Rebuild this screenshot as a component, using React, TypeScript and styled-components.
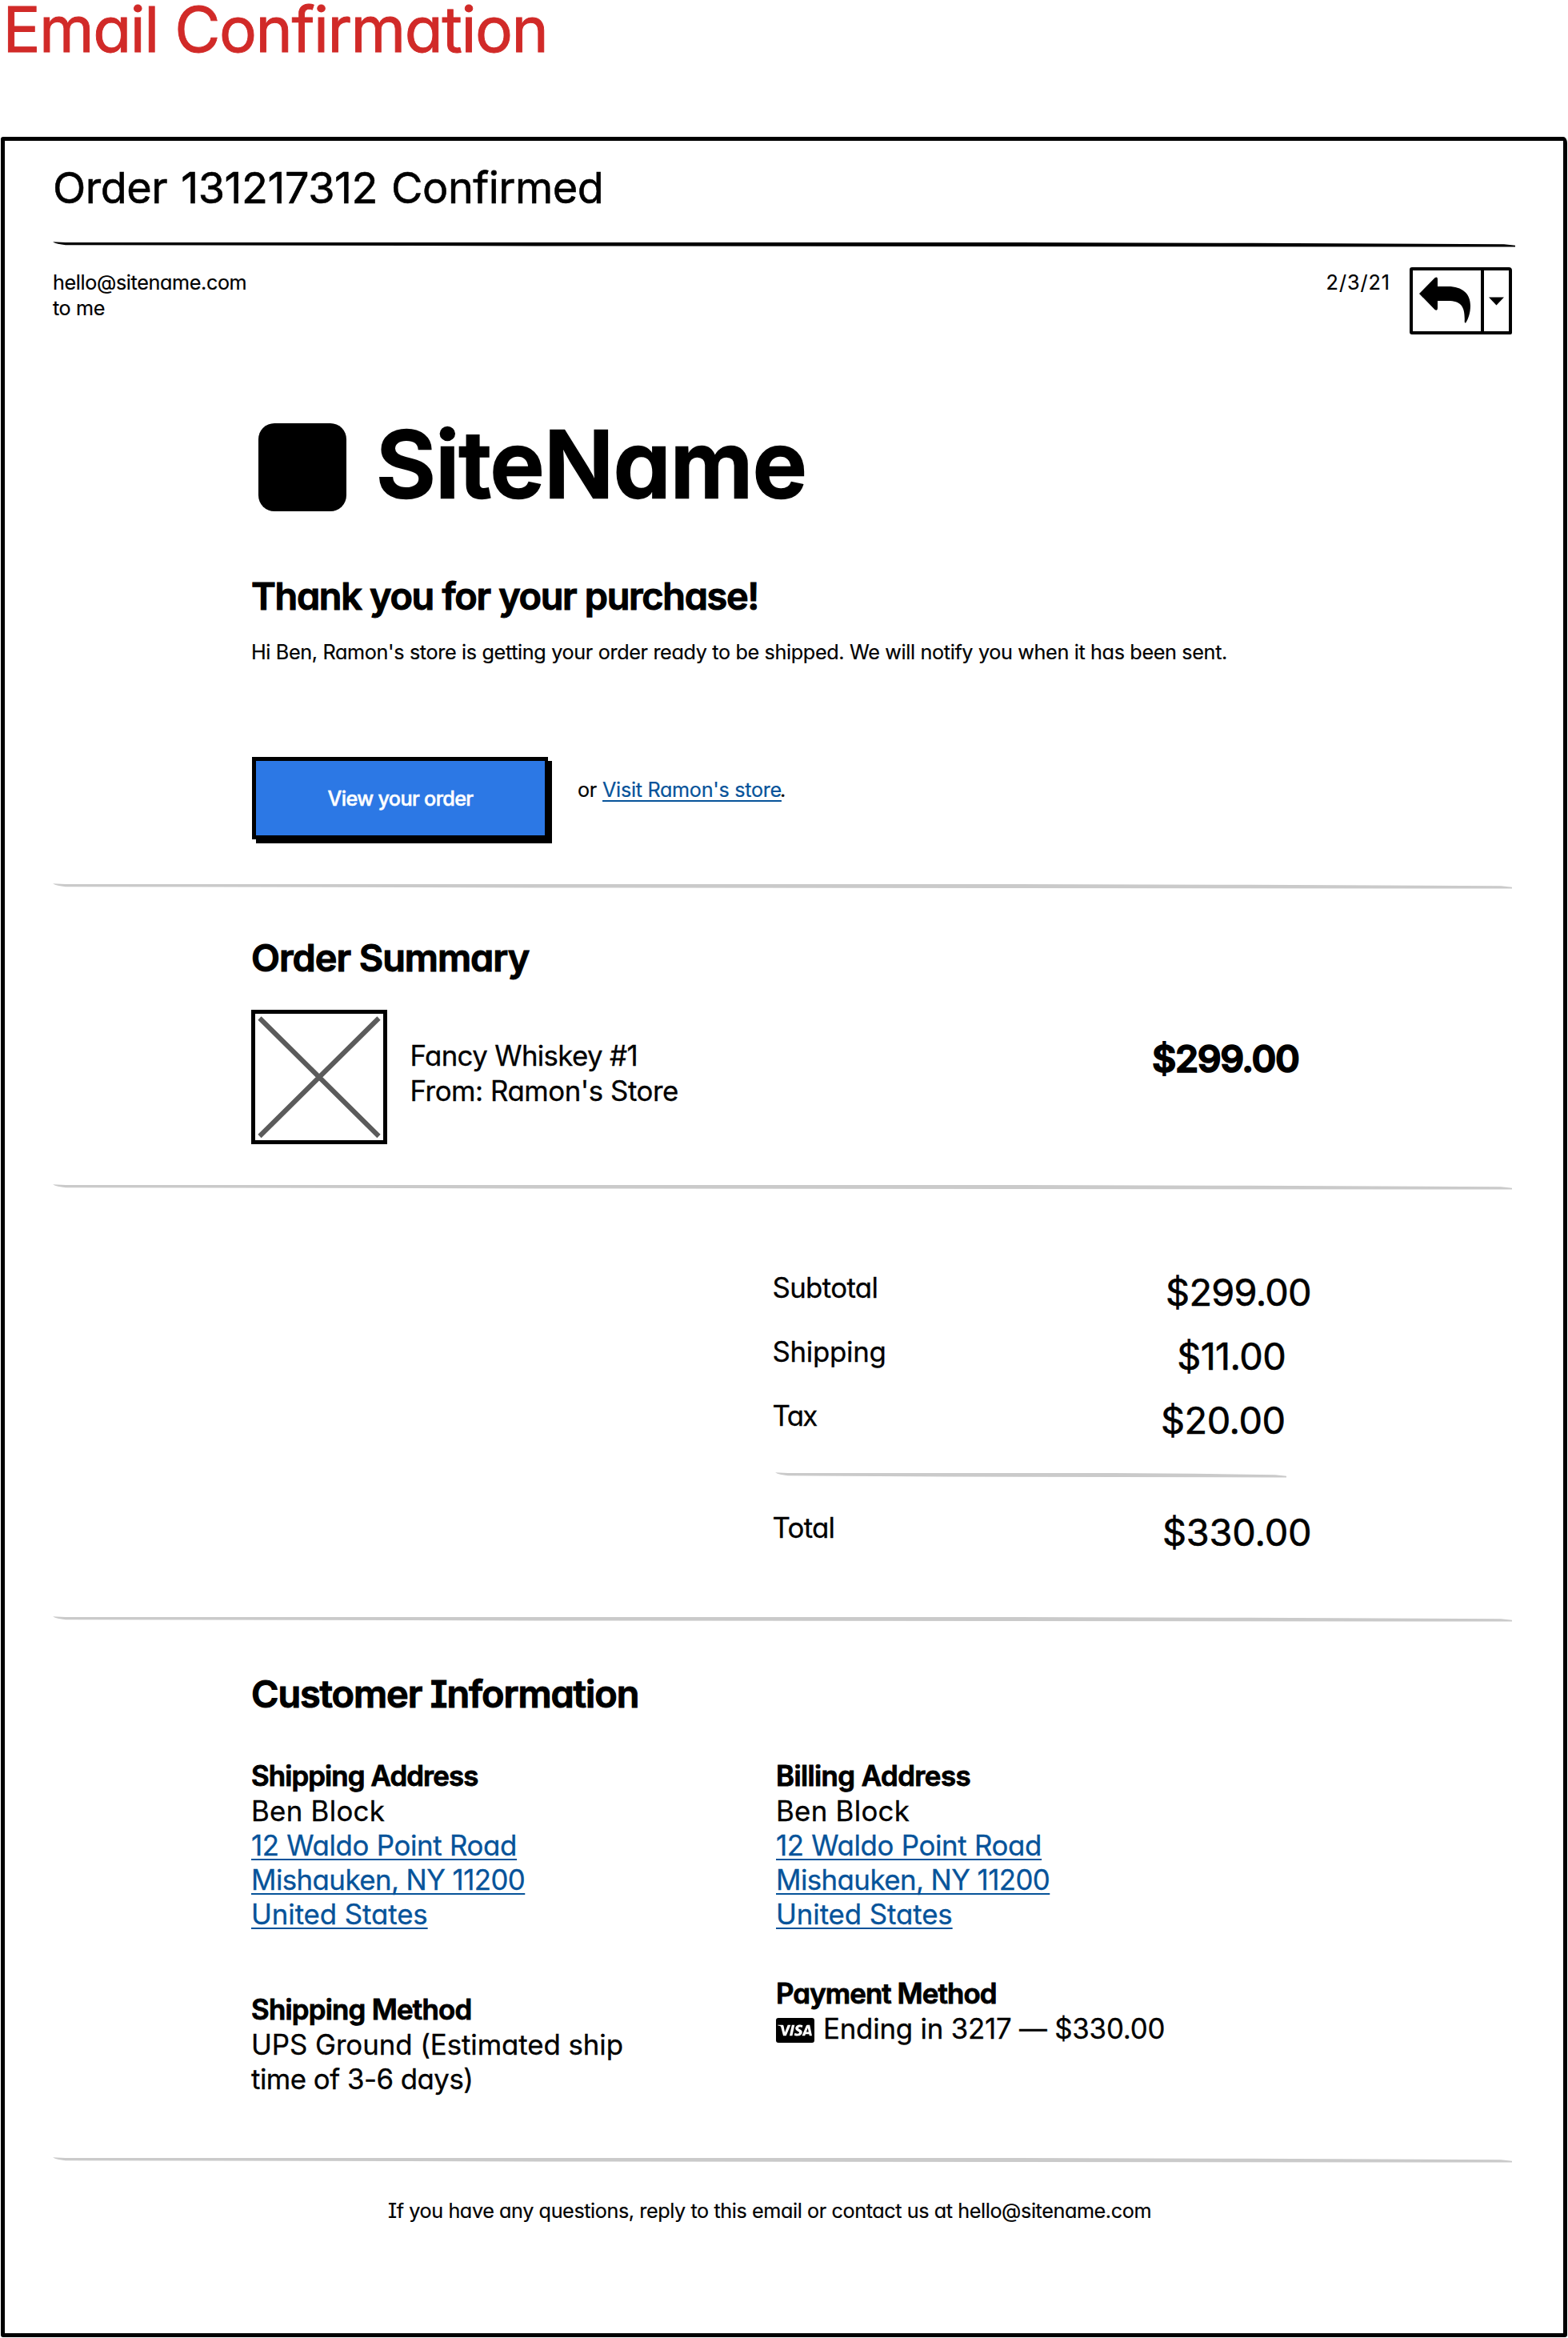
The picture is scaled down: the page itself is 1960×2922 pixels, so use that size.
import React from "react";
import styled, { createGlobalStyle } from "styled-components";
import { SiVisa } from "react-icons/si";

const INK = "#000000";
const LINK = "#06539a";
const RULE = "#cacaca";

const GlobalStyle = createGlobalStyle`
  *, *::before, *::after { box-sizing: border-box; }
  body {
    margin: 0;
    background: #ffffff;
    color: ${INK};
    font-family: Inter, "Open Sans", "Liberation Sans", sans-serif;
    font-feature-settings: "cv11", "cv08";
    font-size: 25.2px;
    line-height: 32px;
    -webkit-text-stroke: 0.2px currentColor;
  }
  h1, h2, h3, p { margin: 0; font: inherit; }
`;

interface Track {
  $track?: number;
}

const tracking = (p: Track) => `${p.$track ?? 0}px`;

const Page = styled.main`
  display: flex;
  flex-direction: column;
  width: 1960px;
  height: 2922px;
`;

const PageTitle = styled.h1`
  padding-left: 3.5px;
  margin-bottom: 97.5px;
  color: #d12a28;
  font-size: 78.4px;
  line-height: 73px;
  letter-spacing: -1.5px;
  white-space: nowrap;
  -webkit-text-stroke-width: 0.9px;
`;

const Mail = styled.article`
  display: flex;
  flex-direction: column;
  height: 2750.5px;
  margin: 0 1px;
  padding: 0 60px 0 59px;
  border: 5px solid ${INK};
  border-radius: 3px 5px 3px 3px / 3px 8px 3px 3px;
`;

const Subject = styled.h2`
  height: 126.5px;
  padding: 29.7px 0 0 1px;
  font-size: 54px;
  line-height: 60px;
  letter-spacing: -0.5px;
  word-spacing: 2.5px;
  white-space: nowrap;
  -webkit-text-stroke-width: 0.6px;
`;

const RuleSvg = styled.svg<{ $width: number }>`
  display: block;
  flex: none;
  width: ${(p) => p.$width}px;
  height: 7px;
  margin-left: 1px;
`;

/* A pen stroke that tapers at both ends and sags slightly to the right. */
function Rule({ width, color = RULE }: { width: number; color?: string }) {
  const w = width;
  const d = `M0 .3 L16 1 H${w * 0.66} L${w * 0.82} 1.8 L${w - 14} 3.2 L${w} 4.8 V6.5 H${w - 14} L${w * 0.33} 5.4 L16 4.2 Q5 3.4 0 .3Z`;
  return (
    <RuleSvg $width={w} viewBox={`0 0 ${w} 7`}>
      <path d={d} fill={color} />
    </RuleSvg>
  );
}

const MetaRow = styled.header`
  display: flex;
  align-items: flex-start;
  padding: 25px 4px 0 1px;
`;

const Sender = styled.div`
  display: flex;
  flex-direction: column;
  margin: 2.5px auto 0 0;
  letter-spacing: -0.38px;
`;

const SentDate = styled.time`
  margin: 2.5px 24px 0 0;
  letter-spacing: 0.95px;
`;

const ReplyGroup = styled.div`
  display: flex;
  width: 128px;
  height: 84px;
  border: 4px solid ${INK};
  border-radius: 3px 4px 2px 3px;
`;

const ReplyButton = styled.button`
  display: flex;
  flex: none;
  width: 89px;
  padding: 0;
  border: 0;
  border-right: 4px solid ${INK};
  background: none;
`;

const MoreButton = styled.button`
  display: flex;
  align-items: center;
  justify-content: center;
  flex: 1;
  padding: 0 1px 0 0;
  border: 0;
  background: none;
`;

const Section = styled.section<{ $height: number; $top: number }>`
  display: flex;
  flex-direction: column;
  flex: none;
  height: ${(p) => p.$height}px;
  padding: ${(p) => p.$top}px 0 0 249px;
`;

const Brand = styled.div`
  display: flex;
  align-items: flex-start;
  gap: 37px;
  margin-bottom: 78px;
  padding-left: 9px;
`;

const BrandMark = styled.div`
  width: 110px;
  height: 110px;
  border-radius: 20px;
  background: ${INK};
`;

const BrandName = styled.div`
  font-size: 115px;
  font-weight: 600;
  line-height: 104px;
  letter-spacing: -0.6px;
  -webkit-text-stroke-width: 2.4px;
`;

const Heading = styled.h2<Track>`
  font-size: 46.8px;
  font-weight: 600;
  line-height: 56px;
  letter-spacing: ${tracking};
  white-space: nowrap;
  -webkit-text-stroke-width: 1.1px;
`;

const Intro = styled.p`
  margin-top: 25.5px;
  letter-spacing: -0.35px;
  white-space: nowrap;
`;

const Actions = styled.div`
  display: flex;
  align-items: flex-start;
  gap: 37px;
  margin: 115.5px 0 0 1px;
`;

const PrimaryButton = styled.button`
  width: 370px;
  height: 103px;
  padding: 0;
  border: 5px solid ${INK};
  border-right-width: 4px;
  box-shadow: 5px 5px 0 ${INK};
  background: #2c78e5;
  color: #ffffff;
  font: 500 25.2px/32px Inter, "Open Sans", sans-serif;
  font-feature-settings: inherit;
  letter-spacing: -0.65px;
  -webkit-text-stroke-width: 0.5px;
`;

const StoreHint = styled.p`
  display: flex;
  gap: 7px;
  margin-top: 24.5px;
  letter-spacing: -0.27px;
`;

const Link = styled.a<Track>`
  color: ${LINK};
  letter-spacing: ${tracking};
  text-decoration: underline;
  text-decoration-thickness: 2px;
  text-decoration-skip-ink: none;
  text-underline-offset: 4px;
`;

const Period = styled.span`
  margin-left: -2px;
`;

const Product = styled.div`
  display: flex;
  align-items: flex-start;
  margin-top: 37.3px;
`;

const Thumb = styled.div`
  display: flex;
  width: 170px;
  height: 168px;
  border: 5px solid ${INK};
`;

const ProductText = styled.div`
  display: flex;
  flex-direction: column;
  margin: 35px auto 0 28.5px;
`;

const Line = styled.span<Track>`
  font-size: 34.8px;
  line-height: 44px;
  letter-spacing: ${tracking};
  white-space: nowrap;
  -webkit-text-stroke-width: 0.3px;
`;

const ProductPrice = styled.strong`
  width: 454px;
  margin-top: 32.7px;
  font-size: 46.8px;
  font-weight: 600;
  line-height: 56px;
  letter-spacing: -1.45px;
  -webkit-text-stroke-width: 1.6px;
`;

const Totals = styled.div`
  display: flex;
  flex-direction: column;
  padding-left: 651.5px;
`;

const TotalRow = styled.div`
  display: grid;
  grid-template-columns: 484.5px auto;
  align-items: start;
  height: 80px;
`;

const Amount = styled.span<Track & { $indent: number }>`
  padding-left: ${(p) => p.$indent}px;
  font-size: 46.8px;
  line-height: 56px;
  letter-spacing: ${tracking};
  -webkit-text-stroke-width: 0.6px;
`;

const SumRule = styled.div`
  height: 60px;
  padding: 13.5px 0 0 2.5px;
`;

const Columns = styled.div`
  display: grid;
  grid-template-columns: 656px auto;
  margin-top: 52px;
`;

const Column = styled.div<{ $gap: number }>`
  display: flex;
  flex-direction: column;
  gap: ${(p) => p.$gap}px;
`;

const Block = styled.div`
  display: flex;
  flex-direction: column;
  align-items: flex-start;
`;

const BlockTitle = styled.h3<Track>`
  font-size: 34.8px;
  font-weight: 600;
  line-height: 45px;
  letter-spacing: ${tracking};
  -webkit-text-stroke-width: 0.9px;
`;

const BlockLine = styled(Line)`
  line-height: 43.1px;
`;

const Payment = styled.div`
  display: flex;
  align-items: flex-start;
  gap: 11.5px;
  margin-top: -1px;
`;

const CardBadge = styled.span`
  display: flex;
  align-items: center;
  justify-content: center;
  width: 47.5px;
  height: 31.5px;
  margin-top: 8.5px;
  border-radius: 3px;
  background: ${INK};
  color: #ffffff;
`;

const Footer = styled.footer`
  padding: 43.5px 0 0 420px;
  letter-spacing: -0.41px;
  white-space: nowrap;
`;

const totals = [
  { label: "Subtotal", labelTrack: -0.64, amount: "$299.00", track: -0.71, indent: 7.1 },
  { label: "Shipping", labelTrack: -0.28, amount: "$11.00", track: -0.58, indent: 21.2 },
  { label: "Tax", labelTrack: -1.6, amount: "$20.00", track: -0.44, indent: 1 },
];

function Address({ title, track }: { title: string; track: number }) {
  return (
    <Block>
      <BlockTitle $track={track}>{title}</BlockTitle>
      <BlockLine $track={0.3}>Ben Block</BlockLine>
      <BlockLine><Link $track={-0.3}>12 Waldo Point Road</Link></BlockLine>
      <BlockLine><Link $track={-0.55}>Mishauken, NY 11200</Link></BlockLine>
      <BlockLine><Link $track={-0.08}>United States</Link></BlockLine>
    </Block>
  );
}

export default function App() {
  return (
    <Page>
      <GlobalStyle />
      <PageTitle>Email Confirmation</PageTitle>
      <Mail>
        <Subject>Order 131217312 Confirmed</Subject>
        <Rule width={1828} color={INK} />
        <MetaRow>
          <Sender>
            <span>hello@sitename.com</span>
            <span>to me</span>
          </Sender>
          <SentDate>2/3/21</SentDate>
          <ReplyGroup>
            <ReplyButton aria-label="Reply">
              <svg width="85" height="76" viewBox="4 4 85 76">
                <path
                  d="M12 33 31.5 13.2Q35 11.3 35 15V24H48C66 24 76 33 76 48 76 57 73.5 64 70.5 69Q69 70.5 68.7 68C69.5 50 65 42 48 42H35V51Q35 55 31.5 53Z"
                  fill={INK}
                />
              </svg>
            </ReplyButton>
            <MoreButton aria-label="More">
              <svg width="19" height="11" viewBox="0 0 19 11">
                <path d="M0 .5H19L9.5 10.5Z" fill={INK} />
              </svg>
            </MoreButton>
          </ReplyGroup>
        </MetaRow>

        <Section $height={686} $top={111}>
          <Brand>
            <BrandMark />
            <BrandName>SiteName</BrandName>
          </Brand>
          <Heading $track={-1.3}>Thank you for your purchase!</Heading>
          <Intro>
            Hi Ben, Ramon's store is getting your order ready to be shipped. We will notify you when it has been sent.
          </Intro>
          <Actions>
            <PrimaryButton>View your order</PrimaryButton>
            <StoreHint>
              <span>or</span>
              <span>
                <Link $track={-0.3}>Visit Ramon's store</Link>
                <Period>.</Period>
              </span>
            </StoreHint>
          </Actions>
        </Section>

        <Rule width={1824} />
        <Section $height={369} $top={57.7}>
          <Heading $track={-1}>Order Summary</Heading>
          <Product>
            <Thumb>
              <svg width="160" height="158" viewBox="0 0 160 158">
                <path d="M5.5 5.5 154.5 153M154.5 5.5 5.5 153" stroke="#5b5b5b" strokeWidth="6" />
              </svg>
            </Thumb>
            <ProductText>
              <Line $track={-0.64}>Fancy Whiskey #1</Line>
              <Line $track={-0.45}>From: Ramon's Store</Line>
            </ProductText>
            <ProductPrice>$299.00</ProductPrice>
          </Product>
        </Section>

        <Rule width={1824} />
        <Section $height={532.5} $top={99.7}>
          <Totals>
            {totals.map((t) => (
              <TotalRow key={t.label}>
                <Line $track={t.labelTrack}>{t.label}</Line>
                <Amount $track={t.track} $indent={t.indent}>{t.amount}</Amount>
              </TotalRow>
            ))}
            <SumRule>
              <Rule width={639} />
            </SumRule>
            <TotalRow>
              <Line $track={-0.74}>Total</Line>
              <Amount $track={-0.16} $indent={3}>$330.00</Amount>
            </TotalRow>
          </Totals>
        </Section>

        <Rule width={1824} />
        <Section $height={669.5} $top={62.5}>
          <Heading $track={-1.08}>Customer Information</Heading>
          <Columns>
            <Column $gap={74.2}>
              <Address title="Shipping Address" track={-0.88} />
              <Block>
                <BlockTitle $track={-0.75}>Shipping Method</BlockTitle>
                <BlockLine $track={-0.06}>UPS Ground (Estimated ship</BlockLine>
                <BlockLine $track={-0.5}>time of 3-6 days)</BlockLine>
              </Block>
            </Column>
            <Column $gap={54.9}>
              <Address title="Billing Address" track={-0.55} />
              <Block>
                <BlockTitle $track={-0.88}>Payment Method</BlockTitle>
                <Payment>
                  <CardBadge>
                    <SiVisa size={43} />
                  </CardBadge>
                  <Line $track={-0.2}>Ending in 3217 — $330.00</Line>
                </Payment>
              </Block>
            </Column>
          </Columns>
        </Section>

        <Rule width={1824} />
        <Footer>
          If you have any questions, reply to this email or contact us at hello@sitename.com
        </Footer>
      </Mail>
    </Page>
  );
}
